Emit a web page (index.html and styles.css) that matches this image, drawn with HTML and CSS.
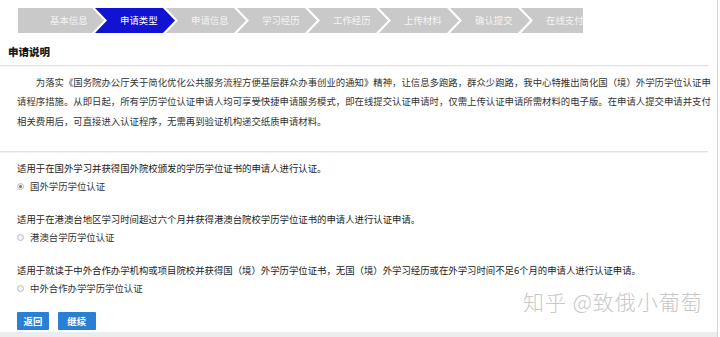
FILE: index.html
```html
<!DOCTYPE html>
<html lang="zh-CN">
<head>
<meta charset="utf-8">
<title>申请类型</title>
<link rel="stylesheet" href="styles.css">
</head>
<body>
<div class="page">
  <ul class="steps">
    <li class="step first">基本信息</li>
    <li class="step active">申请类型</li>
    <li class="step">申请信息</li>
    <li class="step">学习经历</li>
    <li class="step">工作经历</li>
    <li class="step">上传材料</li>
    <li class="step">确认提交</li>
    <li class="step">在线支付</li>
  </ul>
  <h2 class="title">申请说明</h2>
  <div class="intro">
    <p>为落实《国务院办公厅关于简化优化公共服务流程方便基层群众办事创业的通知》精神，让信息多跑路，群众少跑路，我中心特推出简化国（境）外学历学位认证申请程序措施。从即日起，所有学历学位认证申请人均可享受快捷申请服务模式，即在线提交认证申请时，仅需上传认证申请所需材料的电子版。在申请人提交申请并支付相关费用后，可直接进入认证程序，无需再到验证机构递交纸质申请材料。</p>
  </div>
  <div class="options">
    <div class="opt">
      <p class="desc">适用于在国外学习并获得国外院校颁发的学历学位证书的申请人进行认证。</p>
      <label class="radio"><span class="dot checked"></span>国外学历学位认证</label>
    </div>
    <div class="opt">
      <p class="desc">适用于在港澳台地区学习时间超过六个月并获得港澳台院校学历学位证书的申请人进行认证申请。</p>
      <label class="radio"><span class="dot"></span>港澳台学历学位认证</label>
    </div>
    <div class="opt">
      <p class="desc">适用于就读于中外合作办学机构或项目院校并获得国（境）外学历学位证书，无国（境）外学习经历或在外学习时间不足6个月的申请人进行认证申请。</p>
      <label class="radio"><span class="dot"></span>中外合作办学学历学位认证</label>
    </div>
    <div class="actions">
      <button class="btn">返回</button>
      <button class="btn wide">继续</button>
    </div>
  </div>
  <div class="watermark">知乎 @致俄小葡萄</div>
  <div class="band"></div>
</div>
</body>
</html>
```

FILE: styles.css
```css
html, body {
  margin: 0;
  padding: 0;
  background: #fff;
}

body {
  font-family: "Noto Sans CJK SC", "Noto Sans", sans-serif;
  color: #333;
}

.page {
  position: relative;
  width: 717px;
  height: 337px;
  border-right: 1px solid #d4d4d4;
  overflow: hidden;
  display: flex;
  flex-direction: column;
}

.steps {
  display: flex;
  list-style: none;
  margin: 8px 0 0 18px;
  padding: 0;
  width: 565px;
  height: 25px;
  overflow: hidden;
  flex: none;
}

.step {
  flex: none;
  box-sizing: border-box;
  width: 80px;
  height: 25px;
  margin-left: -9px;
  padding-left: 25px;
  line-height: 25px;
  font-size: 9.4px;
  color: #f4f4f4;
  background: #c9c9c9;
  white-space: nowrap;
  clip-path: polygon(0 0, calc(100% - 12px) 0, 100% 50%, calc(100% - 12px) 100%, 0 100%, 12px 50%);
}

.step.first {
  width: 86px;
  margin-left: 0;
  padding-left: 32px;
  clip-path: polygon(0 0, calc(100% - 12px) 0, 100% 50%, calc(100% - 12px) 100%, 0 100%);
}

.step.active {
  background: #1212d2;
  color: #fff;
}

.title {
  margin: 11px 9px 0 0;
  padding: 0 0 5px 8px;
  font-size: 10.5px;
  line-height: 16px;
  font-weight: 900;
  color: #1a1a1a;
  border-bottom: 1px solid #e2e2e2;
  box-shadow: 0 1px 1px rgba(0, 0, 0, 0.04);
}

.intro {
  margin-right: 9px;
  padding: 7px 0 20px 17px;
  border-bottom: 1px solid #e2e2e2;
  box-shadow: 0 1px 1px rgba(0, 0, 0, 0.04);
}

.intro p {
  width: 700px;
  margin: 0;
  font-size: 9.4px;
  line-height: 19.4px;
  text-indent: 2em;
  color: #333;
}

.options {
  padding: 7px 0 0 17px;
}

.opt {
  margin-bottom: 15px;
}

.desc {
  margin: 0;
  font-size: 9.4px;
  line-height: 18px;
  color: #222;
  white-space: nowrap;
}

.radio {
  display: flex;
  align-items: center;
  height: 18px;
  font-size: 9.4px;
  color: #333;
}

.dot {
  box-sizing: border-box;
  width: 7px;
  height: 7px;
  margin-right: 6px;
  border: 1px solid #bdbdbd;
  border-radius: 50%;
  background: #f3f3f3;
  display: flex;
  align-items: center;
  justify-content: center;
}

.dot.checked::after {
  content: "";
  width: 3px;
  height: 3px;
  border-radius: 50%;
  background: #777;
}

.opt:last-of-type {
  margin-bottom: 0;
}

.actions {
  display: flex;
  gap: 9px;
  margin-top: 10px;
}

.btn {
  height: 18px;
  padding: 0 6.5px;
  border: none;
  border-radius: 1px;
  background: #2a7fd2;
  color: #fff;
  font-family: inherit;
  font-size: 9.4px;
  font-weight: bold;
  line-height: 18px;
}

.btn.wide {
  padding: 0 9.5px;
}

.watermark {
  position: absolute;
  left: 523px;
  top: 287px;
  font-size: 21px;
  line-height: 28px;
  letter-spacing: 1px;
  font-weight: 300;
  color: #c8c8c8;
  white-space: nowrap;
}

.band {
  margin-top: auto;
  height: 5px;
  background: #ececec;
  flex: none;
}
```
